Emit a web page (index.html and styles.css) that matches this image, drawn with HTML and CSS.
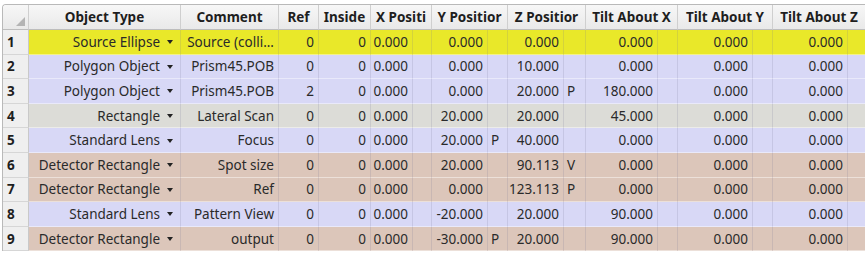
FILE: index.html
```html
<!DOCTYPE html>
<html>
<head>
<meta charset="utf-8">
<link rel="stylesheet" href="styles.css">
</head>
<body>
<div class="sheet">
  <div class="grid">
    <div class="h corner"><svg width="9" height="9" viewBox="0 0 9 9"><path d="M9 0 L9 9 L0 9 Z" fill="#b4b4b4"/></svg></div>
    <div class="h">Object Type</div>
    <div class="h">Comment</div>
    <div class="h">Ref</div>
    <div class="h">Inside</div>
    <div class="h s2">X Positi</div>
    <div class="h s2">Y Positior</div>
    <div class="h s2">Z Positior</div>
    <div class="h s2">Tilt About X</div>
    <div class="h s2">Tilt About Y</div>
    <div class="h s2 last">Tilt About Z</div>

    <div class="n">1</div>
    <div class="c t yel">Source Ellipse<i class="dd"></i></div>
    <div class="c yel">Source (colli...</div>
    <div class="c yel">0</div><div class="c yel">0</div>
    <div class="c yel">0.000</div><div class="c sv yel"></div>
    <div class="c yel">0.000</div><div class="c sv yel"></div>
    <div class="c yel">0.000</div><div class="c sv yel"></div>
    <div class="c yel">0.000</div><div class="c sv yel"></div>
    <div class="c yel">0.000</div><div class="c sv yel"></div>
    <div class="c yel">0.000</div><div class="c sv yel"></div>

    <div class="n">2</div>
    <div class="c t lav">Polygon Object<i class="dd"></i></div>
    <div class="c lav">Prism45.POB</div>
    <div class="c lav">0</div><div class="c lav">0</div>
    <div class="c lav">0.000</div><div class="c sv lav"></div>
    <div class="c lav">0.000</div><div class="c sv lav"></div>
    <div class="c lav">10.000</div><div class="c sv lav"></div>
    <div class="c lav">0.000</div><div class="c sv lav"></div>
    <div class="c lav">0.000</div><div class="c sv lav"></div>
    <div class="c lav">0.000</div><div class="c sv lav"></div>

    <div class="n">3</div>
    <div class="c t lav">Polygon Object<i class="dd"></i></div>
    <div class="c lav">Prism45.POB</div>
    <div class="c lav">2</div><div class="c lav">0</div>
    <div class="c lav">0.000</div><div class="c sv lav"></div>
    <div class="c lav">0.000</div><div class="c sv lav"></div>
    <div class="c lav">20.000</div><div class="c sv lav">P</div>
    <div class="c lav">180.000</div><div class="c sv lav"></div>
    <div class="c lav">0.000</div><div class="c sv lav"></div>
    <div class="c lav">0.000</div><div class="c sv lav"></div>

    <div class="n">4</div>
    <div class="c t gry">Rectangle<i class="dd"></i></div>
    <div class="c gry">Lateral Scan</div>
    <div class="c gry">0</div><div class="c gry">0</div>
    <div class="c gry">0.000</div><div class="c sv gry"></div>
    <div class="c gry">20.000</div><div class="c sv gry"></div>
    <div class="c gry">20.000</div><div class="c sv gry"></div>
    <div class="c gry">45.000</div><div class="c sv gry"></div>
    <div class="c gry">0.000</div><div class="c sv gry"></div>
    <div class="c gry">0.000</div><div class="c sv gry"></div>

    <div class="n">5</div>
    <div class="c t lav">Standard Lens<i class="dd"></i></div>
    <div class="c lav">Focus</div>
    <div class="c lav">0</div><div class="c lav">0</div>
    <div class="c lav">0.000</div><div class="c sv lav"></div>
    <div class="c lav">20.000</div><div class="c sv lav">P</div>
    <div class="c lav">40.000</div><div class="c sv lav"></div>
    <div class="c lav">0.000</div><div class="c sv lav"></div>
    <div class="c lav">0.000</div><div class="c sv lav"></div>
    <div class="c lav">0.000</div><div class="c sv lav"></div>

    <div class="n">6</div>
    <div class="c t pnk">Detector Rectangle<i class="dd"></i></div>
    <div class="c pnk">Spot size</div>
    <div class="c pnk">0</div><div class="c pnk">0</div>
    <div class="c pnk">0.000</div><div class="c sv pnk"></div>
    <div class="c pnk">20.000</div><div class="c sv pnk"></div>
    <div class="c pnk">90.113</div><div class="c sv pnk">V</div>
    <div class="c pnk">0.000</div><div class="c sv pnk"></div>
    <div class="c pnk">0.000</div><div class="c sv pnk"></div>
    <div class="c pnk">0.000</div><div class="c sv pnk"></div>

    <div class="n">7</div>
    <div class="c t pnk">Detector Rectangle<i class="dd"></i></div>
    <div class="c pnk">Ref</div>
    <div class="c pnk">0</div><div class="c pnk">0</div>
    <div class="c pnk">0.000</div><div class="c sv pnk"></div>
    <div class="c pnk">0.000</div><div class="c sv pnk"></div>
    <div class="c pnk">123.113</div><div class="c sv pnk">P</div>
    <div class="c pnk">0.000</div><div class="c sv pnk"></div>
    <div class="c pnk">0.000</div><div class="c sv pnk"></div>
    <div class="c pnk">0.000</div><div class="c sv pnk"></div>

    <div class="n">8</div>
    <div class="c t lav">Standard Lens<i class="dd"></i></div>
    <div class="c lav">Pattern View</div>
    <div class="c lav">0</div><div class="c lav">0</div>
    <div class="c lav">0.000</div><div class="c sv lav"></div>
    <div class="c lav">-20.000</div><div class="c sv lav"></div>
    <div class="c lav">20.000</div><div class="c sv lav"></div>
    <div class="c lav">90.000</div><div class="c sv lav"></div>
    <div class="c lav">0.000</div><div class="c sv lav"></div>
    <div class="c lav">0.000</div><div class="c sv lav"></div>

    <div class="n">9</div>
    <div class="c t pnk">Detector Rectangle<i class="dd"></i></div>
    <div class="c pnk">output</div>
    <div class="c pnk">0</div><div class="c pnk">0</div>
    <div class="c pnk">0.000</div><div class="c sv pnk"></div>
    <div class="c pnk">-30.000</div><div class="c sv pnk">P</div>
    <div class="c pnk">20.000</div><div class="c sv pnk"></div>
    <div class="c pnk">90.000</div><div class="c sv pnk"></div>
    <div class="c pnk">0.000</div><div class="c sv pnk"></div>
    <div class="c pnk">0.000</div><div class="c sv pnk"></div>
  </div>
</div>
</body>
</html>
```

FILE: styles.css
```css
html, body {
  margin: 0;
  padding: 0;
  background: #ffffff;
  width: 865px;
  height: 253px;
  overflow: hidden;
}
.sheet {
  padding: 4px 0 0 2px;
  font-family: "Noto Sans", "Open Sans", sans-serif;
  font-size: 13.5px;
  color: #222;
}
.grid {
  display: grid;
  grid-template-columns: 26px 152px 98px 40px 52px 42px 19px 56px 20px 56px 22px 72px 20px 75px 20px 75px 18px;
  grid-template-rows: 25px repeat(9, 24.6px);
  border-left: 1px solid #b9b9b9;
  border-top: 1px solid #b9b9b9;
  border-top-left-radius: 4px;
  overflow: hidden;
}
.h {
  box-sizing: border-box;
  background: linear-gradient(#f7f7f7, #e9e9e9);
  border-right: 1px solid #cfcfcf;
  border-bottom: 1px solid #bdbdbd;
  font-weight: 700;
  color: #1e1e1e;
  display: flex;
  align-items: center;
  justify-content: center;
  white-space: nowrap;
  overflow: hidden;
}
.h.s2 { grid-column: span 2; }
.corner {
  justify-content: flex-end;
  align-items: flex-end;
  padding: 0 3px 3px 0;
}
.n {
  box-sizing: border-box;
  background: #efefef;
  border-right: 1px solid #c9c9c9;
  border-bottom: 1px solid #d6d6d6;
  font-weight: 700;
  color: #1e1e1e;
  display: flex;
  align-items: center;
  padding-left: 4px;
}
.c {
  box-sizing: border-box;
  border-right: 1px solid rgba(120, 120, 150, 0.18);
  border-bottom: 1px solid rgba(255, 255, 255, 0.45);
  display: flex;
  align-items: center;
  justify-content: flex-end;
  padding-right: 4px;
  white-space: nowrap;
  overflow: hidden;
  color: #2a2a2a;
}
.c.sv {
  justify-content: flex-start;
  padding: 0 0 0 3px;
}
.c.t { padding-right: 7px; }
.dd {
  display: inline-block;
  flex: none;
  width: 0;
  height: 0;
  border-left: 3.5px solid transparent;
  border-right: 3.5px solid transparent;
  border-top: 4px solid #222;
  margin-left: 7px;
  margin-top: 1px;
}
.yel { background: #e9e829; }
.lav { background: #d8d8f6; }
.gry { background: #dcdcd7; }
.pnk { background: #dcc6ba; }
```
